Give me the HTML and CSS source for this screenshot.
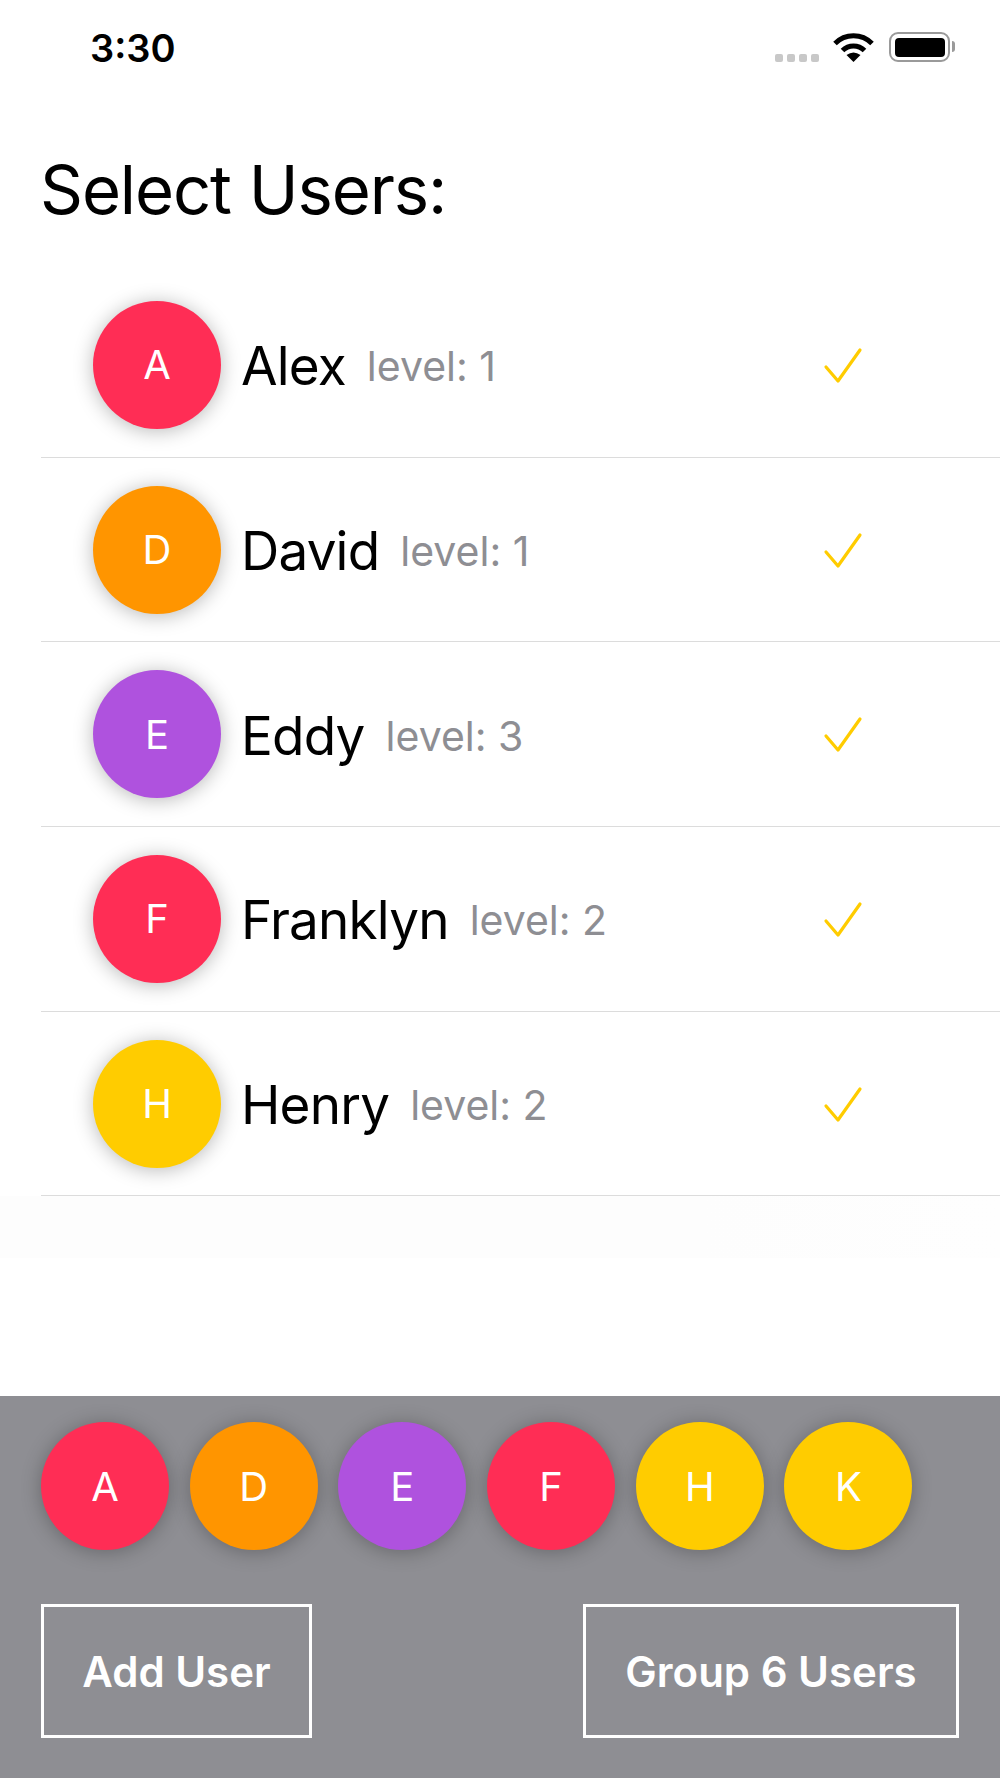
FILE: index.html
```html
<!DOCTYPE html>
<html lang="en">
<head>
  <meta charset="UTF-8">
  <title>Select Users</title>
  <link rel="stylesheet" href="styles.css">
</head>
<body>
  <div class="app">
    <div class="status-bar">
      <span class="time">3:30</span>
      <div class="status-icons">
        <div class="signal"><i></i><i></i><i></i><i></i></div>
        <svg class="wifi" width="41" height="30" viewBox="0 0 41 30">
          <path d="M2 11.5 A26 26 0 0 1 39 11.5" fill="none" stroke="#000" stroke-width="5"/>
          <path d="M9.5 18.5 A15.5 15.5 0 0 1 31.5 18.5" fill="none" stroke="#000" stroke-width="5"/>
          <path d="M20.5 30 L13.5 23 Q20.5 18 27.5 23 Z" fill="#000"/>
        </svg>
        <div class="battery"><div class="battery-fill"></div></div>
      </div>
    </div>

    <h1 class="title">Select Users:</h1>

    <div class="list">
      <div class="row">
        <div class="avatar red">A</div>
        <span class="name">Alex</span><span class="level">level: 1</span>
        <svg class="check" width="40" height="38" viewBox="0 0 40 38"><path d="M3 20 L15 34 L37 3" fill="none" stroke="#fc0" stroke-width="3.2" stroke-linecap="round" stroke-linejoin="round"/></svg>
      </div>
      <div class="row">
        <div class="avatar orange">D</div>
        <span class="name">David</span><span class="level">level: 1</span>
        <svg class="check" width="40" height="38" viewBox="0 0 40 38"><path d="M3 20 L15 34 L37 3" fill="none" stroke="#fc0" stroke-width="3.2" stroke-linecap="round" stroke-linejoin="round"/></svg>
      </div>
      <div class="row">
        <div class="avatar purple">E</div>
        <span class="name">Eddy</span><span class="level">level: 3</span>
        <svg class="check" width="40" height="38" viewBox="0 0 40 38"><path d="M3 20 L15 34 L37 3" fill="none" stroke="#fc0" stroke-width="3.2" stroke-linecap="round" stroke-linejoin="round"/></svg>
      </div>
      <div class="row">
        <div class="avatar red">F</div>
        <span class="name">Franklyn</span><span class="level">level: 2</span>
        <svg class="check" width="40" height="38" viewBox="0 0 40 38"><path d="M3 20 L15 34 L37 3" fill="none" stroke="#fc0" stroke-width="3.2" stroke-linecap="round" stroke-linejoin="round"/></svg>
      </div>
      <div class="row">
        <div class="avatar yellow">H</div>
        <span class="name">Henry</span><span class="level">level: 2</span>
        <svg class="check" width="40" height="38" viewBox="0 0 40 38"><path d="M3 20 L15 34 L37 3" fill="none" stroke="#fc0" stroke-width="3.2" stroke-linecap="round" stroke-linejoin="round"/></svg>
      </div>
    </div>
    <div class="list-fade"></div>

    <div class="panel">
      <div class="selected">
        <div class="avatar red">A</div>
        <div class="avatar orange">D</div>
        <div class="avatar purple">E</div>
        <div class="avatar red">F</div>
        <div class="avatar yellow">H</div>
        <div class="avatar yellow">K</div>
      </div>
      <div class="actions">
        <button class="btn btn-add">Add User</button>
        <button class="btn btn-group">Group 6 Users</button>
      </div>
    </div>
  </div>
</body>
</html>
```

FILE: styles.css
```css
* {
  box-sizing: border-box;
}

body {
  margin: 0;
  font-family: Inter, 'Noto Sans', sans-serif;
  background-color: #fff;
  color: #000;
}

.app {
  display: flex;
  flex-direction: column;
  height: 1778px;
  overflow: hidden;
}

.status-bar {
  display: flex;
  justify-content: space-between;
  height: 94px;
  padding: 30px 50px 0 90px;
}

.time {
  font-size: 38px;
  line-height: 36px;
  font-weight: 600;
}

.status-icons {
  display: flex;
  align-items: flex-start;
  padding-top: 2px;
}

.signal {
  display: flex;
  gap: 4px;
  margin-top: 22px;
  margin-right: 14px;
}

.signal i {
  width: 8px;
  height: 8px;
  border-radius: 2px;
  background: #c8c8c8;
}

.wifi {
  margin-right: 15px;
}

.battery {
  position: relative;
  width: 61px;
  height: 30px;
  padding: 3.5px;
  border: 2.5px solid #9a9a9a;
  border-radius: 9px;
}

.battery::after {
  content: '';
  position: absolute;
  right: -7px;
  top: 7px;
  width: 3px;
  height: 11px;
  border-radius: 0 3px 3px 0;
  background: #9a9a9a;
}

.battery-fill {
  height: 100%;
  background: #000;
  border-radius: 4px;
}

.title {
  margin: 0;
  padding-left: 40px;
  height: 179px;
  font-size: 67px;
  line-height: 191px;
  font-weight: 400;
  letter-spacing: -1.1px;
}

.list {
  margin-left: 41px;
}

.row {
  display: flex;
  align-items: center;
  height: 184.7px;
  padding-left: 52px;
  border-bottom: 1.5px solid #dcdcdc;
}

.avatar {
  display: flex;
  align-items: center;
  justify-content: center;
  flex-shrink: 0;
  width: 128px;
  height: 128px;
  border-radius: 50%;
  color: #fff;
  font-size: 40px;
  box-shadow: 0 2px 20px rgba(0, 0, 0, 0.28);
}

.red { background: #ff2d55; }
.orange { background: #ff9500; }
.purple { background: #af52de; }
.yellow { background: #fc0; }

.name {
  margin-top: 3px;
  margin-left: 20px;
  font-size: 53px;
  letter-spacing: -0.8px;
}

.level {
  margin-top: 3px;
  margin-left: 21px;
  font-size: 41px;
  color: #8e8e93;
}

.check {
  margin-top: 2px;
  margin-left: auto;
  margin-right: 137px;
}

.list-fade {
  height: 62px;
  background: linear-gradient(to right, #fdfdfd 70%, #fefefe);
}

.panel {
  margin-top: auto;
  height: 382px;
  padding: 26px 41px 0;
  background: #8e8e93;
}

.selected {
  display: flex;
  gap: 20.7px;
}

.actions {
  display: flex;
  justify-content: space-between;
  margin-top: 54px;
}

.btn {
  height: 134px;
  border: 3px solid #fff;
  background: none;
  color: #fff;
  font-family: inherit;
  font-size: 42px;
  font-weight: 600;
  padding: 0;
}

.btn-add {
  width: 271px;
}

.btn-group {
  width: 376px;
}
```
